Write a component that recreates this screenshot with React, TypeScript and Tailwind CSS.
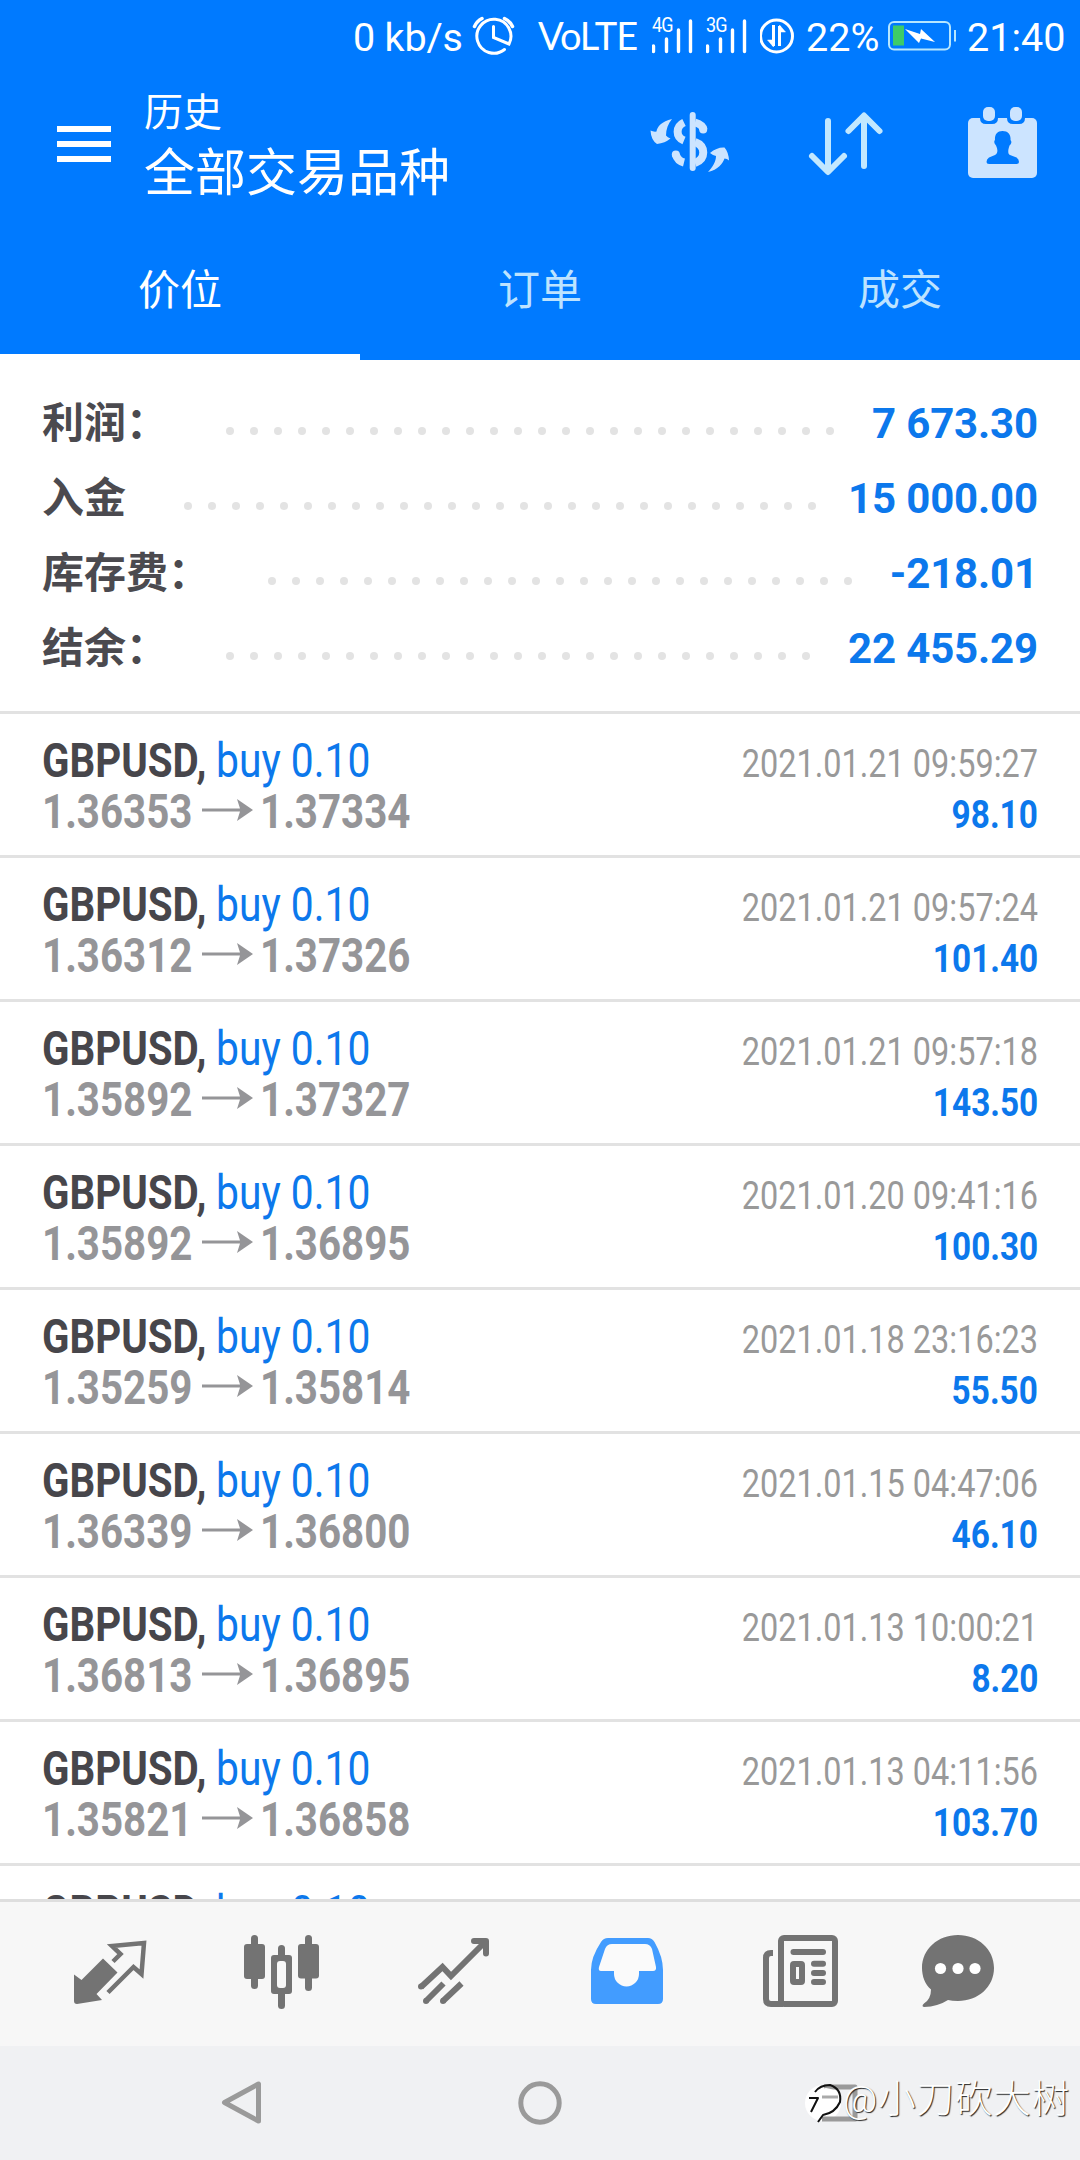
import React from 'react';

const summary = [
  { label: '利润：', dots: 26, value: '7 673.30' },
  { label: '入金', dots: 27, value: '15 000.00' },
  { label: '库存费：', dots: 25, value: '-218.01' },
  { label: '结余：', dots: 25, value: '22 455.29' },
];

const deals = [
  { open: '1.36353', close: '1.37334', time: '2021.01.21 09:59:27', profit: '98.10' },
  { open: '1.36312', close: '1.37326', time: '2021.01.21 09:57:24', profit: '101.40' },
  { open: '1.35892', close: '1.37327', time: '2021.01.21 09:57:18', profit: '143.50' },
  { open: '1.35892', close: '1.36895', time: '2021.01.20 09:41:16', profit: '100.30' },
  { open: '1.35259', close: '1.35814', time: '2021.01.18 23:16:23', profit: '55.50' },
  { open: '1.36339', close: '1.36800', time: '2021.01.15 04:47:06', profit: '46.10' },
  { open: '1.36813', close: '1.36895', time: '2021.01.13 10:00:21', profit: '8.20' },
  { open: '1.35821', close: '1.36858', time: '2021.01.13 04:11:56', profit: '103.70' },
];

const Signal = ({ label }: { label: string }) => (
  <div className="relative w-[54px] h-[72px]">
    <span className="absolute left-0 top-[15px] origin-left scale-x-[0.9] text-[20px] leading-[20px] tracking-[-1px]">{label}</span>
    <svg className="w-[54px] h-[72px]" viewBox="0 0 54 72" stroke="currentColor" strokeWidth="3.4" strokeLinecap="round">
      <path d="M1.500 46V51.500M14.500 39V51.500M26.500 30V51.500M38.500 21V51.500" />
    </svg>
  </div>
);

const StatusBar = () => (
  <div className="flex h-[72px] text-[39.5px] leading-[75px] whitespace-nowrap">
    <div className="ml-[353px] w-[118px] tracking-[-0.2px]">0 kb/s</div>
    <svg className="w-[48px] h-[72px]" viewBox="471 0 48 72" fill="none" stroke="currentColor" strokeWidth="3" strokeLinecap="round">
      <path d="M504.500 49.500A17 17 0 1 1 509 44L493.500 37.500V26.500" />
      <path d="M474.500 26.500Q477 21 482 18.500M504.500 18.500Q510 21 512.500 26.500" strokeWidth="3.500" />
    </svg>
    <div className="ml-[19px] w-[114px] font-['Lato',sans-serif] text-[38px] leading-[70px] tracking-[-1px]">VoLTE</div>
    <Signal label="4G" />
    <Signal label="3G" />
    <svg className="w-[40px] h-[72px]" viewBox="760 0 40 72" fill="none" stroke="currentColor" strokeWidth="3">
      <circle cx="776.500" cy="36" r="16" />
      <path d="M773.500 25V46M779.500 46V26" />
      <path d="M773.500 47L767.500 40H773.500ZM779.500 25L785.500 32H779.500Z" fill="currentColor" strokeWidth="0.500" />
    </svg>
    <div className="ml-[6px] w-[80px]">22%</div>
    <svg className="w-[72px] h-[72px]" viewBox="886 0 72 72">
      <rect x="889" y="22" width="61" height="27.500" rx="5" fill="none" stroke="#b5e6ff" strokeWidth="2" />
      <rect x="893" y="25.500" width="11" height="20" fill="#3ecb68" />
      <path d="M905 29L920 34L921 29L935 42L921 38.500L919 43Z" fill="white" />
      <path d="M955 30V41.500" stroke="#b5e6ff" strokeWidth="2" />
    </svg>
    <div className="ml-[9px]">21:40</div>
  </div>
);

const Header = () => (
  <header className="h-[360px] shrink-0 bg-[#007aff] text-white">
    <StatusBar />
    <div className="flex h-[144px]">
      <div className="ml-[57px] mt-[54px] flex w-[54px] flex-col gap-[9px]">
        <span className="h-[6px] bg-white" />
        <span className="h-[6px] bg-white" />
        <span className="h-[6px] bg-white" />
      </div>
      <div className="ml-[33px] mt-[16px] w-[496px]">
        <div className="text-[39px] leading-[50px]">历史</div>
        <div className="text-[51px] leading-[72px]">全部交易品种</div>
      </div>
      <svg className="w-[100px] h-[144px]" viewBox="640 72 100 144" fill="none" stroke="#cce4ff" strokeWidth="8">
        <path d="M692.700 115V168" strokeWidth="6" strokeLinecap="round" />
        <path d="M684 122.500C675.500 126.500 675.500 137 684 140.500M695 122.500C700 124 703 126.500 703.500 129.500" />
        <circle cx="703.200" cy="129.500" r="4" fill="#cce4ff" stroke="none" />
        <circle cx="675.800" cy="154.500" r="4" fill="#cce4ff" stroke="none" />
        <path d="M695 142C706 146 706 159 695 163M675.800 154.500C677 159 680 161.500 684 162.500" />
        <path d="M672 119C662 121 657 127 656.500 131.500Q653.500 132 650.500 130.500Q651 140 657 144Q665 143 670.500 138.500Q667.500 137.500 666 135.500C666 129 668 124 672 119ZM708 172C718 170 723 163 724.500 158.500Q727 158.500 729 160.500Q728.500 152 724.500 147.500Q717 147 710 153Q713 155.500 716 156C716 161 713 167 708 172Z" fill="#cce4ff" stroke="none" />
      </svg>
      <svg className="ml-[60px] w-[100px] h-[144px]" viewBox="800 72 100 144" fill="none" stroke="#c2e8ff" strokeWidth="6" strokeLinecap="round" strokeLinejoin="round">
        <path d="M828 121V171M812 156L828 172L844 156M864 166V116M848.500 131L864 115.500L879.500 131" />
      </svg>
      <svg className="ml-[60px] w-[90px] h-[144px]" viewBox="960 72 90 144" fill="#cce4ff">
        <rect x="968" y="118" width="69" height="60" rx="5" />
        <path d="M980 117h18v1q0 6-6 6h-6q-6 0-6-6zM1007 117h18v1q0 6-6 6h-6q-6 0-6-6z" fill="#007aff" />
        <rect x="983" y="107" width="12" height="14" rx="5" />
        <rect x="1010" y="107" width="12" height="14" rx="5" />
        <path d="M1002.500 131C997 131 994.500 135 995 140C993.500 141.500 994.500 144 996 145.500C998 150 998 153.500 995 155L989 157.500Q986.500 159 986.500 162Q986.500 164 989 164H1016.500Q1019 164 1019 162Q1019 159 1016.500 157.500L1010 155C1007.500 153.500 1008 150 1009.500 145.500C1011.500 144 1012 141.500 1010.500 140C1011 135 1008.500 131 1002.500 131Z" fill="#007aff" />
      </svg>
    </div>
    <div className="grid h-[144px] grid-cols-3 text-center text-[42px] leading-[138px]">
      <div className="h-[144px] border-b-6 border-white"><span className="relative top-[6px]">价位</span></div>
      <div className="text-[#bde3ff]"><span className="relative top-[6px]">订单</span></div>
      <div className="text-[#bde3ff]"><span className="relative top-[6px]">成交</span></div>
    </div>
  </header>
);

const Title = () => (
  <div className="flex">
    <span className="w-[174px]"><span className="inline-block origin-left scale-x-[0.84] font-bold text-[#47464b]">GBPUSD,</span></span>
    <span className="inline-block origin-left scale-x-[0.85] text-[#0c78ec]">buy 0.10</span>
  </div>
);

const DealRow = ({ deal }: { deal: typeof deals[number] }) => (
  <div className="flex h-[144px] justify-between border-t-3 border-[#e2e2e2] pl-[42px] pr-[42px] whitespace-nowrap">
    <div className="pt-[21px] text-[48px] leading-[51px]">
      <Title />
      <div className="flex font-bold text-[#959598]">
        <span className="w-[160px]"><span className="inline-block origin-left scale-x-[0.84]">{deal.open}</span></span>
        <svg className="w-[51px] h-[51px]" viewBox="0 0 51 51" fill="#959598">
          <path d="M0 22.500H38L35 13L51 24L35 35L38 25.500H0Z" />
        </svg>
        <span className="ml-[7px] w-[160px]"><span className="inline-block origin-left scale-x-[0.84]">{deal.close}</span></span>
      </div>
    </div>
    <div className="flex flex-col items-end pt-[25px] text-[39px] leading-[51px]">
      <span className="origin-right scale-x-[0.832] text-[#999999]">{deal.time}</span>
      <span className="origin-right scale-x-[0.855] font-bold text-[#0c78ec]">{deal.profit}</span>
    </div>
  </div>
);

const TabBar = () => (
  <nav className="flex h-[147px] shrink-0 border-t-3 border-[#dedede] bg-[#f7f7f7] pl-[24px] text-[#737373]">
    <svg className="w-[172px] h-[144px]" viewBox="24 1902 172 144">
      <path d="M74 1974.500L81.500 1980L103 1958.500L117.500 1972.500L96.500 1994L102 2000L77 2004Q74 2004 74 2001Z" fill="currentColor" />
      <path d="M113 1961.500L120.500 1954L112 1946L144 1943L141.500 1974L133.500 1967L108 1992.500" fill="none" stroke="currentColor" strokeWidth="4.500" />
    </svg>
    <svg className="w-[172px] h-[144px]" viewBox="196 1902 172 144" fill="currentColor">
      <rect x="251" y="1935" width="7" height="54" rx="3.500" />
      <rect x="244" y="1944" width="21" height="35" rx="3" />
      <rect x="305" y="1935" width="7" height="56" rx="3.500" />
      <rect x="298" y="1944" width="21" height="34.500" rx="3" />
      <rect x="278" y="1945" width="7" height="64" rx="3.500" />
      <rect x="271" y="1955" width="21" height="39" rx="3" />
      <rect x="277" y="1961" width="9" height="27" rx="3" fill="#f7f7f7" />
    </svg>
    <svg className="w-[172px] h-[144px]" viewBox="368 1902 172 144" fill="none" stroke="currentColor" strokeWidth="6">
      <path d="M421 1987L442.500 1967L451 1976L486 1941" />
      <path d="M474 1941H486V1953.500" strokeLinecap="round" strokeLinejoin="round" />
      <path d="M426 2001L443.500 1983.500M443 2001L461.500 1983.500" />
      <g fill="currentColor" stroke="none">
        <circle cx="421" cy="1986.500" r="3" />
        <circle cx="426" cy="2001" r="3" />
        <circle cx="443" cy="2001" r="3" />
      </g>
    </svg>
    <svg className="w-[172px] h-[144px]" viewBox="540 1902 172 144">
      <path d="M608 1938H648Q652 1938 654.500 1942Q663 1957 663 1970V1999Q663 2004 658 2004H596Q591 2004 591 1999V1970Q591 1957 601 1942Q603.500 1938 608 1938Z" fill="#429cff" />
      <path d="M612 1944H645Q650 1944 652 1949L656 1967Q656.500 1971 653 1971H639V1974A12.500 12.500 0 0 1 614 1974V1971H601Q598 1971 599 1967L605 1949Q607 1944 612 1944Z" fill="#fafafa" />
    </svg>
    <svg className="w-[172px] h-[144px]" viewBox="712 1902 172 144" fill="none" stroke="currentColor" strokeWidth="6">
      <rect x="781" y="1938" width="54" height="66" rx="3" />
      <path d="M773 1953H771Q766 1953 766 1958V1999Q766 2004 771 2004H783" />
      <path d="M793.500 1952H823" strokeLinecap="round" />
      <path d="M814 1963.800H823M814 1973H823M814 1982H823" strokeLinecap="round" />
      <rect x="793" y="1964" width="9" height="18" rx="1" />
    </svg>
    <svg className="w-[172px] h-[144px]" viewBox="884 1902 172 144" fill="currentColor">
      <path d="M958 1935C978 1935 994 1949 994 1968S978 2001 958 2001Q952 2001 948 2000Q938 2006.500 924 2007Q921 2006.500 924 2003.500Q931 1999 931 1989.500C925 1985 922 1976 922 1968C922 1949 938 1935 958 1935Z" />
      <g fill="#fff">
        <circle cx="940.500" cy="1968.500" r="5.600" />
        <circle cx="958" cy="1968.500" r="5.600" />
        <circle cx="975" cy="1968.500" r="5.600" />
      </g>
    </svg>
  </nav>
);

const SystemNav = () => (
  <div className="relative flex h-[114px] shrink-0 bg-[#f0f1f3]">
    <svg className="w-[1080px] h-[114px]" viewBox="0 2046 1080 114" fill="none" stroke="#9a9a9a" strokeWidth="5" strokeLinejoin="round">
      <path d="M224.500 2102.500L258.500 2084V2121Z" />
      <circle cx="540" cy="2103" r="19.200" />
      <circle cx="823" cy="2103" r="18" fill="#fff" stroke="none" />
      <path d="M824 2087H855V2119H822" />
      <path d="M826 2088Q842 2090 839 2103Q834 2113 822 2115L812 2105L815 2090Z" fill="#fff" stroke="none" />
      <path d="M822 2097H838" stroke="#aaa" strokeWidth="3" />
      <path d="M815 2092Q820 2085 830 2085Q842 2089 840 2102Q835 2113 823 2115L818 2122M809 2098H818L811 2112" stroke="#111" strokeWidth="2" />
    </svg>
    <span className="absolute left-[843px] top-[28px] whitespace-nowrap text-[37.5px] leading-[50px] font-light tracking-[0.9px] text-white [text-shadow:1px_1px_1px_#222]">@小刀砍大树</span>
  </div>
);

const App: React.FC = () => {
  return (
    <div className="flex h-[2160px] w-[1080px] flex-col overflow-hidden bg-white font-['Roboto','Noto_Sans_CJK_SC',sans-serif]">
      <Header />

      {/* Account totals */}
      <section className="h-[351px] shrink-0 pt-[26px] pl-[42px] pr-[42px]">
        {summary.map((row) => (
          <div key={row.label} className="flex h-[75px] text-[42px]">
            <span className="leading-[75px] font-bold text-[#4b4a4f]">{row.label}</span>
            <span className="ml-[58px] mt-[41px] flex gap-[16px]">
              {Array.from({ length: row.dots }, (_, i) => (
                <span key={i} className="h-[8px] w-[8px] rounded-full bg-[#e3e3e3]" />
              ))}
            </span>
            <span className="ml-auto leading-[75px] font-bold tracking-[-0.15px] text-[#0c78ec]">{row.value}</span>
          </div>
        ))}
      </section>

      {/* Closed positions */}
      <main className="h-[1188px] shrink-0 overflow-hidden">
        {deals.map((deal) => (
          <DealRow key={deal.time} deal={deal} />
        ))}
        <div className="border-t-3 border-[#e2e2e2] pl-[42px] pt-[21px] text-[48px] leading-[51px] whitespace-nowrap">
          <Title />
        </div>
      </main>

      <TabBar />
      <SystemNav />
    </div>
  );
};

export default App;
